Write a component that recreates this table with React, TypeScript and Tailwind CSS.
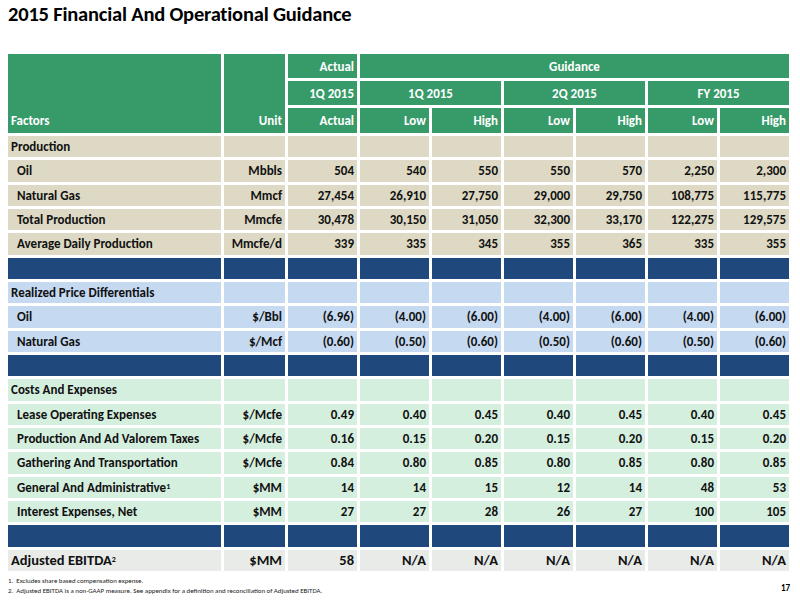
import React from "react";

type Row =
  | { kind: "section"; label: string; bg: string }
  | { kind: "item"; label: string; sup?: string; unit: string; values: string[]; bg: string }
  | { kind: "spacer" }
  | { kind: "total"; label: string; sup?: string; unit: string; values: string[] };

const TAN = "bg-[#ddd9c4]";
const BLUE = "bg-[#c5d9f1]";
const MINT = "bg-[#d5efdf]";

const rows: Row[] = [
  { kind: "section", label: "Production", bg: TAN },
  { kind: "item", label: "Oil", unit: "Mbbls", values: ["504", "540", "550", "550", "570", "2,250", "2,300"], bg: TAN },
  { kind: "item", label: "Natural Gas", unit: "Mmcf", values: ["27,454", "26,910", "27,750", "29,000", "29,750", "108,775", "115,775"], bg: TAN },
  { kind: "item", label: "Total Production", unit: "Mmcfe", values: ["30,478", "30,150", "31,050", "32,300", "33,170", "122,275", "129,575"], bg: TAN },
  { kind: "item", label: "Average Daily Production", unit: "Mmcfe/d", values: ["339", "335", "345", "355", "365", "335", "355"], bg: TAN },
  { kind: "spacer" },
  { kind: "section", label: "Realized Price Differentials", bg: BLUE },
  { kind: "item", label: "Oil", unit: "$/Bbl", values: ["(6.96)", "(4.00)", "(6.00)", "(4.00)", "(6.00)", "(4.00)", "(6.00)"], bg: BLUE },
  { kind: "item", label: "Natural Gas", unit: "$/Mcf", values: ["(0.60)", "(0.50)", "(0.60)", "(0.50)", "(0.60)", "(0.50)", "(0.60)"], bg: BLUE },
  { kind: "spacer" },
  { kind: "section", label: "Costs And Expenses", bg: MINT },
  { kind: "item", label: "Lease Operating Expenses", unit: "$/Mcfe", values: ["0.49", "0.40", "0.45", "0.40", "0.45", "0.40", "0.45"], bg: MINT },
  { kind: "item", label: "Production And Ad Valorem Taxes", unit: "$/Mcfe", values: ["0.16", "0.15", "0.20", "0.15", "0.20", "0.15", "0.20"], bg: MINT },
  { kind: "item", label: "Gathering And Transportation", unit: "$/Mcfe", values: ["0.84", "0.80", "0.85", "0.80", "0.85", "0.80", "0.85"], bg: MINT },
  { kind: "item", label: "General And Administrative", sup: "1", unit: "$MM", values: ["14", "14", "15", "12", "14", "48", "53"], bg: MINT },
  { kind: "item", label: "Interest Expenses, Net", unit: "$MM", values: ["27", "27", "28", "26", "27", "100", "105"], bg: MINT },
  { kind: "spacer" },
  { kind: "total", label: "Adjusted EBITDA", sup: "2", unit: "$MM", values: ["58", "N/A", "N/A", "N/A", "N/A", "N/A", "N/A"] },
];

const head = "bg-[#379a69] text-white flex items-center px-[3px]";

function BodyRow({ row }: { row: Row }) {
  if (row.kind === "spacer") {
    return (
      <>
        {Array.from({ length: 9 }).map((_, i) => (
          <div key={i} className="bg-[#1f497d]" />
        ))}
      </>
    );
  }
  if (row.kind === "section") {
    return (
      <>
        <div className={`${row.bg} flex items-center pl-[3px]`}>{row.label}</div>
        {Array.from({ length: 8 }).map((_, i) => (
          <div key={i} className={row.bg} />
        ))}
      </>
    );
  }
  const isTotal = row.kind === "total";
  const bg = isTotal ? "bg-[#e8ebe8]" : row.bg;
  return (
    <>
      <div className={`${bg} flex items-center ${isTotal ? "pl-[3px] text-[14.5px]" : "pl-[9px]"}`}>
        {row.label}
        {row.sup && <sup className="text-[8px] relative -top-[1px]">{row.sup}</sup>}
      </div>
      <div className={`${bg} flex items-center justify-end pr-[3px] ${isTotal ? "text-[14.5px]" : ""}`}>{row.unit}</div>
      {row.values.map((v, i) => (
        <div key={i} className={`${bg} flex items-center justify-end pr-[3px] ${isTotal ? "text-[14.5px]" : ""}`}>
          {v}
        </div>
      ))}
    </>
  );
}

export default function App() {
  return (
    <div
      className="w-[800px] h-[600px] bg-white text-black relative overflow-hidden"
      style={{ fontFamily: "Carlito, Lato, 'Liberation Sans', sans-serif" }}
    >
      <h1 className="pl-[8px] pt-[1px] text-[20.5px] font-bold leading-[26px] tracking-[-0.2px]">
        2015 Financial And Operational Guidance
      </h1>

      <div className="ml-[8px] mt-[27px] grid grid-cols-[213px_61px_69px_repeat(6,69px)] grid-rows-[24px_24px_25px_repeat(18,21.33px)] gap-[3px] text-[13px] font-bold leading-none text-[#111]">
        <div className={`${head} row-span-3 items-end pb-[6px]`}>Factors</div>
        <div className={`${head} row-span-3 items-end justify-end pb-[6px]`}>Unit</div>
        <div className={`${head} justify-end`}>Actual</div>
        <div className={`${head} col-span-6 justify-center`}>Guidance</div>
        <div className={`${head} justify-end`}>1Q 2015</div>
        <div className={`${head} col-span-2 justify-center`}>1Q 2015</div>
        <div className={`${head} col-span-2 justify-center`}>2Q 2015</div>
        <div className={`${head} col-span-2 justify-center`}>FY 2015</div>
        <div className={`${head} justify-end`}>Actual</div>
        <div className={`${head} justify-end`}>Low</div>
        <div className={`${head} justify-end`}>High</div>
        <div className={`${head} justify-end`}>Low</div>
        <div className={`${head} justify-end`}>High</div>
        <div className={`${head} justify-end`}>Low</div>
        <div className={`${head} justify-end`}>High</div>

        {rows.map((r, i) => (
          <BodyRow key={i} row={r} />
        ))}
      </div>

      <div className="pl-[8px] mt-[5px] text-[6.9px] leading-[10px] text-[#222]">
        <div>1.&nbsp; Excludes share based compensation expense.</div>
        <div>2.&nbsp; Adjusted EBITDA is a non-GAAP measure. See appendix for a definition and reconciliation of Adjusted EBITDA.</div>
      </div>
      <div className="absolute right-[10px] bottom-[6px] text-[9px] font-bold">17</div>
    </div>
  );
}
